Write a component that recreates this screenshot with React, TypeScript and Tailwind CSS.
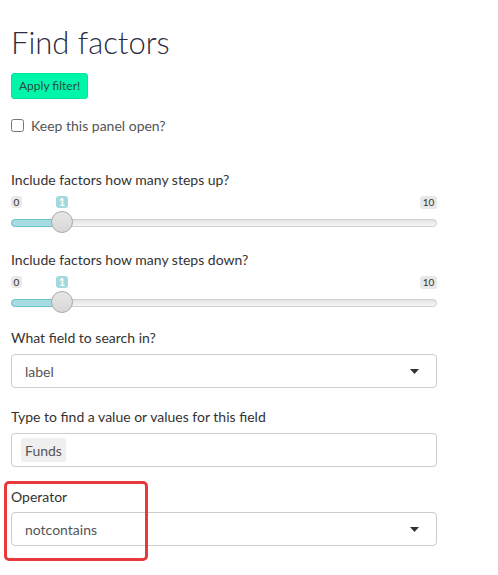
import React from "react";

function Slider() {
  return (
    <div className="relative h-[40px] w-[426px]">
      <div className="absolute left-0 top-[1px] h-[12px] w-[11px] rounded-[3px] bg-[#e8e8e8] text-[10px] leading-[12px] text-[#333] text-center">0</div>
      <div className="absolute left-[45px] top-[1px] h-[12px] w-[12px] rounded-[3px] bg-[#a2d9de] text-[11px] font-bold leading-[12px] text-white text-center">1</div>
      <div className="absolute right-0 top-[1px] h-[13px] w-[17px] rounded-[3px] bg-[#e8e8e8] text-[10px] leading-[13px] text-[#333] text-center">10</div>
      <div className="absolute left-0 right-0 top-[24px] h-[8px] rounded-full border border-[#cfcfcf] bg-gradient-to-b from-[#e4e4e4] to-[#f6f6f6]"></div>
      <div className="absolute left-0 top-[24px] h-[8px] w-[52px] rounded-l-full border border-[#6cc3c9] bg-[#a7dce0]"></div>
      <div className="absolute left-[40px] top-[16px] h-[22px] w-[22px] rounded-full border border-[#aaa] bg-gradient-to-b from-[#e6e6e6] to-[#d8d8d8]"></div>
    </div>
  );
}

function Caret() {
  return (
    <svg width="9" height="5" viewBox="0 0 9 5" className="block">
      <path d="M0 0 L9 0 L4.5 5 Z" fill="#333" />
    </svg>
  );
}

export default function App() {
  const font = { fontFamily: "Lato, 'Open Sans', sans-serif" };
  return (
    <div className="relative h-[575px] w-[498px] bg-white" style={font}>
      <div className="flex flex-col pl-[11px] pt-[26px]">
        <h1 className="h-[33px] text-[31px] font-light leading-[33px] text-[#2b2d42]">Find factors</h1>
        <div className="mt-[14px] flex">
          <button className="h-[26px] rounded-[3px] border border-[#00e69a] bg-[#00f7ab] px-[7px] text-[12px] text-[#2a4a3f]">Apply filter!</button>
        </div>
        <label className="mt-[16px] flex h-[20px] items-center gap-[7px] text-[14px] text-[#555]">
          <input type="checkbox" className="m-0 h-[13px] w-[13px]" />
          <span>Keep this panel open?</span>
        </label>
        <div className="mt-[35px] h-[20px] text-[14px] leading-[20px] text-[#333]">Include factors how many steps up?</div>
        <div className="mt-[5px]"><Slider /></div>
        <div className="mt-[15px] h-[20px] text-[14px] leading-[20px] text-[#333]">Include factors how many steps down?</div>
        <div className="mt-[5px]"><Slider /></div>
        <div className="mt-[13px] h-[20px] text-[14px] leading-[20px] text-[#333]">What field to search in?</div>
        <div className="mt-[6px] flex h-[34px] w-[426px] items-center justify-between rounded-[4px] border border-[#ccc] pl-[13px] pr-[17px] text-[14px] text-[#555]">
          <span>label</span>
          <Caret />
        </div>
        <div className="mt-[19px] h-[20px] text-[14px] leading-[20px] text-[#333]">Type to find a value or values for this field</div>
        <div className="mt-[6px] flex h-[34px] w-[426px] items-center rounded-[4px] border border-[#ccc] pl-[9px] text-[14px] text-[#555]">
          <span className="flex h-[24px] items-center rounded-[3px] bg-[#efefef] px-[4px]">Funds</span>
        </div>
        <div className="mt-[20px] h-[20px] text-[14px] leading-[20px] text-[#333]">Operator</div>
        <div className="mt-[5px] flex h-[34px] w-[426px] items-center justify-between rounded-[4px] border border-[#ccc] pl-[13px] pr-[17px] text-[14px] text-[#555]">
          <span>notcontains</span>
          <Caret />
        </div>
      </div>
      <div className="absolute left-[4px] top-[481px] h-[80px] w-[144px] rounded-[5px] border-[3px] border-[#e8393a]"></div>
    </div>
  );
}
